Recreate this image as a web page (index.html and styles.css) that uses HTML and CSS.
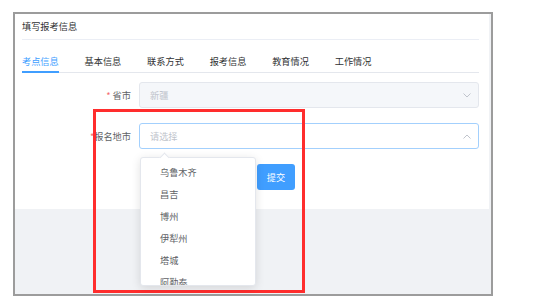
FILE: index.html
```html
<!DOCTYPE html>
<html lang="zh-CN">
<head>
    <meta charset="UTF-8">
    <title>填写报考信息</title>
    <link rel="stylesheet" href="styles.css">
</head>
<body>

    <div class="frame">
        <div class="card">
            <div class="card-header">填写报考信息</div>

            <div class="tabs">
                <div class="tab active">考点信息</div>
                <div class="tab">基本信息</div>
                <div class="tab">联系方式</div>
                <div class="tab">报考信息</div>
                <div class="tab">教育情况</div>
                <div class="tab">工作情况</div>
            </div>

            <form class="form">
                <div class="form-item">
                    <label class="form-label"><span class="star">*</span> 省市</label>
                    <div class="select disabled">
                        <span class="value">新疆</span>
                        <svg class="arrow" width="8" height="5" viewBox="0 0 8 5"><path d="M0.5 0.5 L4 4 L7.5 0.5" fill="none" stroke="#c0c4cc" stroke-width="1"/></svg>
                    </div>
                </div>

                <div class="form-item">
                    <label class="form-label"><span class="star">*</span>报名地市</label>
                    <div class="select focused">
                        <span class="value">请选择</span>
                        <svg class="arrow" width="8" height="5" viewBox="0 0 8 5"><path d="M0.5 4.5 L4 1 L7.5 4.5" fill="none" stroke="#c0c4cc" stroke-width="1"/></svg>

                        <div class="dropdown">
                            <span class="popper-arrow"></span>
                            <ul class="options">
                                <li>乌鲁木齐</li>
                                <li>昌吉</li>
                                <li>博州</li>
                                <li>伊犁州</li>
                                <li>塔城</li>
                                <li>阿勒泰</li>
                            </ul>
                        </div>
                    </div>
                </div>

                <div class="form-item">
                    <div class="form-label"></div>
                    <button type="button" class="btn-primary">提交</button>
                </div>
            </form>
        </div>
    </div>

    <!-- marcação em vermelho -->
    <div class="highlight"></div>

</body>
</html>
```

FILE: styles.css
```css
body {
    margin: 0;
    background-color: #ffffff;
    font-family: "Noto Sans CJK SC", "Noto Sans", sans-serif;
    font-size: 9.2px;
    color: #606266;
}

.frame {
    position: relative;
    width: 476px;
    height: 280px;
    margin: 12px 0 0 13px;
    border: 2px solid #9c9c9c;
    background-color: #f0f2f5;
}

.card {
    width: 457px;
    margin-right: 2px;
    padding: 0 10px 19px 7px;
    background-color: #ffffff;
}

.card-header {
    line-height: 25px;
    color: #303133;
    border-bottom: 1px solid #ebeef5;
}

.tabs {
    display: flex;
    gap: 25.8px;
    border-bottom: 1px solid #e4e7ed;
}

.tab {
    padding-top: 14px;
    line-height: 14px;
    padding-bottom: 3px;
    border-bottom: 2px solid transparent;
    margin-bottom: -1px;
    color: #303133;
}

.tab.active {
    color: #409eff;
    border-bottom-color: #409eff;
}

.form {
    margin-top: 9px;
}

.form-item {
    display: flex;
    align-items: center;
    margin-bottom: 15px;
}

.form-item:last-child {
    margin-bottom: 0;
}

.form-label {
    width: 109px;
    padding-right: 8px;
    text-align: right;
    color: #606266;
    flex-shrink: 0;
}

.star {
    color: #f56c6c;
}

.select {
    position: relative;
    flex: 1;
    height: 24px;
    display: flex;
    align-items: center;
    justify-content: space-between;
    padding: 0 7px 0 10px;
    border: 1px solid #dcdfe6;
    border-radius: 3px;
    background-color: #ffffff;
}

.select .value {
    color: #c0c4cc;
}

.select.disabled {
    background-color: #f5f7fa;
    border-color: #e4e7ed;
}

.select.focused {
    border-color: #a3d0fd;
}

.dropdown {
    position: absolute;
    left: 0;
    top: 33px;
    width: 114px;
    height: 127px;
    background-color: #ffffff;
    border: 1px solid #e4e7ed;
    border-radius: 3px;
    box-shadow: 0 2px 10px rgba(0, 0, 0, 0.12);
    z-index: 2;
}

.popper-arrow {
    position: absolute;
    left: 20px;
    top: -4px;
    width: 6px;
    height: 6px;
    background-color: #ffffff;
    border-left: 1px solid #e4e7ed;
    border-top: 1px solid #e4e7ed;
    transform: rotate(45deg);
}

.options {
    list-style: none;
    margin: 0;
    padding: 3px 0 0;
    height: 124px;
    overflow: hidden;
}

.options li {
    height: 22px;
    line-height: 22px;
    padding-left: 19px;
    color: #606266;
}

.btn-primary {
    margin-left: 118px;
    width: 38px;
    height: 26px;
    padding: 0;
    border: none;
    border-radius: 3px;
    background-color: #409eff;
    color: #ffffff;
    font-family: inherit;
    font-size: 9.2px;
}

.highlight {
    position: absolute;
    left: 93px;
    top: 109px;
    width: 206px;
    height: 178px;
    border: 3px solid #ff2d2d;
}
```
